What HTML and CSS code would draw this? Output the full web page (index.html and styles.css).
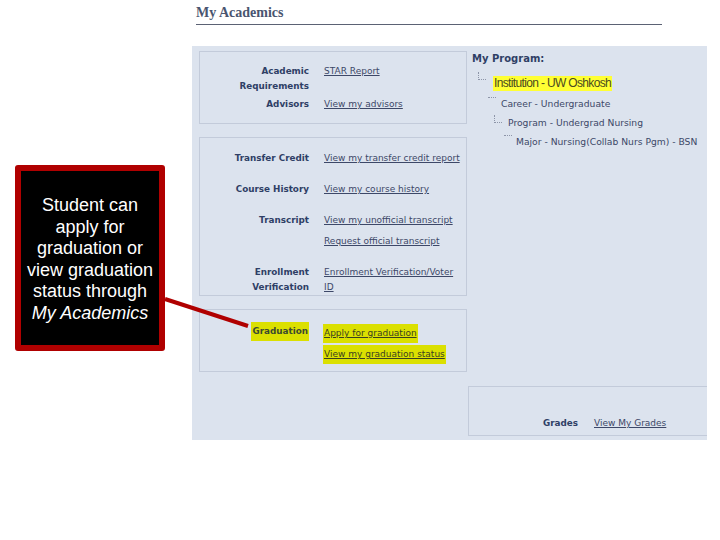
FILE: index.html
```html
<!DOCTYPE html>
<html lang="en">

<head>
    <meta charset="UTF-8">
    <title>My Academics</title>
    <link rel="stylesheet" href="styles.css">
</head>

<body>
    <div class="slide">
        <div class="page">
            <h1 class="title">My Academics</h1>
            <div class="panel">
                <div class="left-col">
                    <div class="box box-req">
                        <div class="row">
                            <div class="label">Academic Requirements</div>
                            <div class="links"><a>STAR Report</a></div>
                        </div>
                        <div class="row">
                            <div class="label">Advisors</div>
                            <div class="links"><a>View my advisors</a></div>
                        </div>
                    </div>
                    <div class="box box-records">
                        <div class="row">
                            <div class="label">Transfer Credit</div>
                            <div class="links"><a>View my transfer credit report</a></div>
                        </div>
                        <div class="row">
                            <div class="label">Course History</div>
                            <div class="links"><a>View my course history</a></div>
                        </div>
                        <div class="row">
                            <div class="label">Transcript</div>
                            <div class="links links-spaced">
                                <a>View my unofficial transcript</a>
                                <a>Request official transcript</a>
                            </div>
                        </div>
                        <div class="row row-enroll">
                            <div class="label">Enrollment Verification</div>
                            <div class="links"><a>Enrollment Verification/Voter ID</a></div>
                        </div>
                    </div>
                    <div class="box box-grad">
                        <div class="row">
                            <div class="label"><span class="mark mark-label">Graduation</span></div>
                            <div class="links links-grad">
                                <a class="mark">Apply for graduation</a>
                                <a class="mark">View my graduation status</a>
                            </div>
                        </div>
                    </div>
                </div>
                <div class="right-col">
                    <div class="program">
                        <h2 class="program-title">My Program:</h2>
                        <div class="node node-inst"><i class="dots"></i><span class="inst">Institution - UW Oshkosh</span></div>
                        <div class="node node-career"><i class="dots dots-short"></i><span>Career - Undergraduate</span></div>
                        <div class="node node-prog"><i class="dots"></i><span>Program - Undergrad Nursing</span></div>
                        <div class="node node-major"><i class="dots dots-short"></i><span>Major - Nursing(Collab Nurs Pgm) - BSN</span></div>
                    </div>
                    <div class="grades-box">
                        <div class="label">Grades</div>
                        <a>View My Grades</a>
                    </div>
                </div>
            </div>
        </div>

        <!-- callout sits on top of the screenshot -->
        <div class="callout">
            Student can apply for graduation or view graduation status through <em>My Academics</em>
        </div>
        <svg class="arrow" width="90" height="34" viewBox="0 0 90 34">
            <line x1="1" y1="2" x2="84" y2="29" stroke="#b00000" stroke-width="4" />
        </svg>
    </div>
</body>

</html>
```

FILE: styles.css
```css
* {
    box-sizing: border-box;
    margin: 0;
    padding: 0;
}

body {
    background: #fff;
    font-family: 'DejaVu Sans', sans-serif;
    font-size: 9px;
    line-height: 15px;
    color: #3d4868;
}

.slide {
    position: relative;
    width: 720px;
    height: 540px;
    overflow: hidden;
}

.page {
    width: 515px;
    margin-left: 192px;
}

.title {
    width: 466px;
    height: 25px;
    margin-left: 4px;
    margin-bottom: 21px;
    padding-top: 4px;
    border-bottom: 1px solid #5b6274;
    font-family: 'Liberation Serif', serif;
    font-size: 14px;
    line-height: 18px;
    color: #4a5570;
}

.panel {
    height: 394px;
    background: #dce3ee;
    display: flex;
}

.left-col {
    width: 276px;
    padding: 5px 0 0 7px;
}

.box {
    width: 268px;
    margin-bottom: 13px;
    border: 1px solid #c3cbda;
}

.box-req {
    height: 73px;
    padding-top: 12px;
}

.box-req .row + .row {
    margin-top: 3px;
}

.box-records {
    height: 159px;
    padding-top: 13px;
}

.box-records .row + .row {
    margin-top: 16px;
}

.box-records .row-enroll {
    margin-top: 15px;
}

.box-grad {
    height: 63px;
    padding-top: 14px;
}

.row {
    display: flex;
    gap: 15px;
}

.label {
    width: 109px;
    flex: none;
    text-align: right;
    font-size: 8.8px;
    font-weight: bold;
    color: #2f3f66;
}

.links {
    display: flex;
    flex-direction: column;
    align-items: flex-start;
    width: 140px;
}

.links-spaced {
    gap: 6px;
}

.links-grad {
    gap: 2px;
}

a {
    text-decoration: underline;
}

.mark {
    background: #dbe000;
    color: #3a4020;
    padding: 2px 1px;
}

.links-grad .mark {
    margin-left: -1px;
}

.mark-label {
    display: inline-block;
    margin-top: -3px;
    color: #3c4a30;
}

.right-col {
    flex: 1;
    display: flex;
    flex-direction: column;
    justify-content: space-between;
}

.program {
    padding: 5px 0 0 4px;
    font-size: 9.2px;
}

.program-title {
    font-size: 10px;
    line-height: 15px;
    color: #2f3f66;
}

.node {
    display: flex;
    align-items: flex-start;
}

.dots {
    flex: none;
    width: 8px;
    height: 8px;
    border-left: 1px dotted #8d95a8;
    border-bottom: 1px dotted #8d95a8;
}

.dots-short {
    height: 3px;
    margin-top: 1px;
    border-left: none;
    border-top: 1px dotted #8d95a8;
    border-bottom: none;
}

.node-inst {
    margin: 6px 0 0 6px;
    height: 22px;
}

.node-inst .dots {
    margin-right: 7px;
}

.inst {
    margin-top: 4px;
    padding: 0 1px;
    background: #ffff33;
    color: #4a4a20;
    font-family: 'Liberation Sans', sans-serif;
    font-size: 12px;
    letter-spacing: -0.65px;
}

.node-career {
    margin: 0 0 0 16px;
    height: 18px;
    padding-top: 2px;
}

.node-career .dots {
    margin-right: 5px;
}

.node-prog {
    margin: 0 0 0 22px;
    height: 19px;
    padding-top: 3px;
}

.node-prog .dots {
    margin-right: 6px;
}

.node-major {
    margin: 0 0 0 32px;
    padding-top: 3px;
}

.node-major .dots {
    margin-right: 4px;
}

.grades-box {
    height: 50px;
    margin-bottom: 4px;
    padding-bottom: 4px;
    border: 1px solid #c3cbda;
    border-right: none;
    display: flex;
    align-items: flex-end;
    gap: 16px;
}

.callout {
    position: absolute;
    left: 15px;
    top: 165px;
    width: 150px;
    height: 186px;
    padding: 24px 5px 0;
    background: #000;
    border: 6px solid #b00000;
    border-radius: 3px;
    color: #fff;
    font-family: 'Liberation Sans', sans-serif;
    font-size: 18px;
    line-height: 21.6px;
    text-align: center;
}

.arrow {
    position: absolute;
    left: 164px;
    top: 297px;
}
```
